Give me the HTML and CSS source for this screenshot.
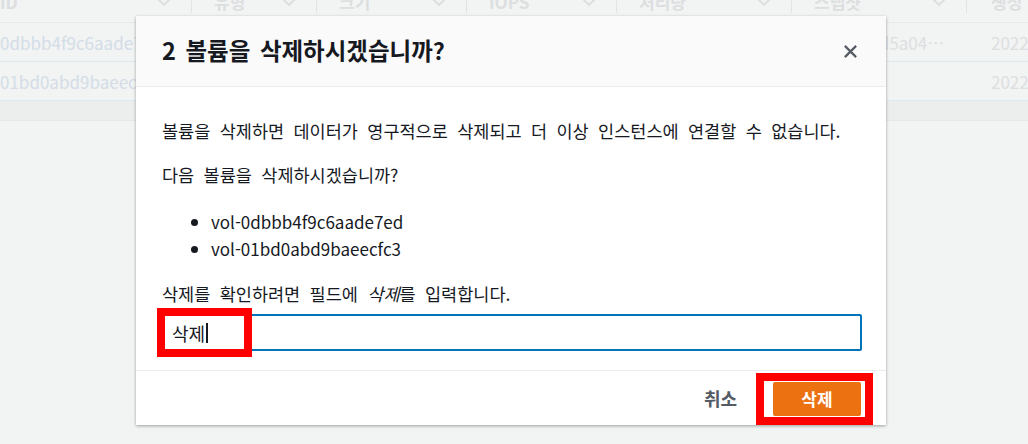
FILE: index.html
```html
<!DOCTYPE html>
<html lang="ko">
<head>
<meta charset="utf-8">
<link rel="stylesheet" href="styles.css">
</head>
<body>
<div class="page">
  <div class="table">
    <div class="row head">
      <div class="cell"><span class="label">ID</span><svg class="caret" viewBox="0 0 14 8"><path d="M1 1l6 6 6-6"/></svg></div>
      <div class="cell"><span class="label">유형</span><svg class="caret" viewBox="0 0 14 8"><path d="M1 1l6 6 6-6"/></svg></div>
      <div class="cell"><span class="label">크기</span><svg class="caret" viewBox="0 0 14 8"><path d="M1 1l6 6 6-6"/></svg></div>
      <div class="cell"><span class="label">IOPS</span><svg class="caret" viewBox="0 0 14 8"><path d="M1 1l6 6 6-6"/></svg></div>
      <div class="cell"><span class="label">처리량</span><svg class="caret" viewBox="0 0 14 8"><path d="M1 1l6 6 6-6"/></svg></div>
      <div class="cell"><span class="label">스냅샷</span><svg class="caret" viewBox="0 0 14 8"><path d="M1 1l6 6 6-6"/></svg></div>
      <div class="cell last"><span class="label">생성</span></div>
    </div>
    <div class="row">
      <div class="cell id">0dbbb4f9c6aade7ed</div>
      <div class="cell"></div>
      <div class="cell"></div>
      <div class="cell"></div>
      <div class="cell"></div>
      <div class="cell snap">snap-0f2d5a04…</div>
      <div class="cell last">2022/05/10</div>
    </div>
    <div class="row">
      <div class="cell id">01bd0abd9baeecfc3</div>
      <div class="cell"></div>
      <div class="cell"></div>
      <div class="cell"></div>
      <div class="cell"></div>
      <div class="cell snap"></div>
      <div class="cell last">2022/05/10</div>
    </div>
    <div class="band"></div>
  </div>

  <div class="modal">
    <div class="modal-head">
      <h2 class="title">2 볼륨을 삭제하시겠습니까?</h2>
      <svg class="close" viewBox="0 0 16 16"><path d="M2 2l12 12M14 2L2 14"/></svg>
    </div>
    <div class="modal-body">
      <p class="para">볼륨을 삭제하면 데이터가 영구적으로 삭제되고 더 이상 인스턴스에 연결할 수 없습니다.</p>
      <p class="para">다음 볼륨을 삭제하시겠습니까?</p>
      <ul class="vols">
        <li>vol-0dbbb4f9c6aade7ed</li>
        <li>vol-01bd0abd9baeecfc3</li>
      </ul>
      <p class="confirm">삭제를 확인하려면 필드에 <em>삭제</em>를 입력합니다.</p>
      <div class="field"><span class="typed">삭제</span><span class="cursor"></span><span class="mark mark-input"></span></div>
    </div>
    <div class="modal-foot">
      <span class="cancel">취소</span>
      <span class="btn-wrap"><span class="btn">삭제</span><span class="mark mark-btn"></span></span>
    </div>
  </div>
</div>
</body>
</html>
```

FILE: styles.css
```css
* { box-sizing: border-box; }
html, body { margin: 0; padding: 0; }
body {
  width: 1028px;
  height: 444px;
  overflow: hidden;
  background: #f2f3f3;
  font-family: "Noto Sans CJK KR", "Noto Sans", sans-serif;
  color: #16191f;
}
.page { position: relative; width: 1028px; height: 444px; overflow: hidden; }

.table { margin-top: -19px; }
.row {
  display: grid;
  grid-template-columns: 192px 125px 150px 150px 175px 175px 1fr;
  border-bottom: 1px solid #dde9ef;
  height: 39px;
  align-items: center;
  font-size: 17px;
  color: #dcdfe0;
}
.row.head { height: 42px; font-weight: 700; border-bottom-color: #e4e8e9; }
.cell {
  display: flex;
  align-items: center;
  padding-left: 22px;
  padding-right: 20px;
  white-space: nowrap;
  overflow: hidden;
}
.cell.last { padding-left: 24px; }
.row.head .cell { border-right: 1px solid #e1e4e5; height: 22px; justify-content: space-between; }
.row.head .cell.last { border-right: none; }
.row.head .cell:first-child { padding-left: 0; }
.row .cell.id { padding-left: 0; color: #d2dde7; }
.cell.snap { display: block; padding-left: 18px; padding-right: 0; }
.caret { width: 14px; height: 8px; fill: none; stroke: #dcdfe0; stroke-width: 2; flex: none; }
.band { height: 20px; background: #eceeee; border-bottom: 1px solid #e4e8e9; }

.modal {
  position: absolute;
  left: 136px;
  top: 16px;
  width: 750px;
  background: #fff;
  box-shadow: 0 1px 3px rgba(0,0,0,.35);
  display: flex;
  flex-direction: column;
}
.modal-head {
  height: 71px;
  background: #fafafa;
  border-bottom: 1px solid #eaeded;
  display: flex;
  align-items: center;
  justify-content: space-between;
  padding: 0 28px 0 26px;
}
.title { margin: 0; font-size: 23.5px; font-weight: 700; color: #16191f; line-height: 1; word-spacing: 3px; }
.close { width: 15px; height: 15px; fill: none; stroke: #545b64; stroke-width: 2.3; }

.modal-body { padding: 33px 24px 19px 26px; font-size: 17.5px; line-height: 22px; word-spacing: 4.5px; }
.para { margin: 0 0 22px; }
.para + .para { margin-bottom: 25px; }
.vols { margin: 0; padding-left: 49px; word-spacing: 0; font-size: 17px; }
.vols li { margin-bottom: 5px; }
.vols li:last-child { margin-bottom: 0; }
.confirm { margin: 23px 0 9px; }
.confirm em { font-style: italic; }
.field {
  position: relative;
  height: 37px;
  border: 2px solid #0073bb;
  border-radius: 2px;
  display: flex;
  align-items: center;
  padding-left: 8px;
}
.typed { color: #16191f; font-size: 18px; }
.cursor { width: 2px; height: 20px; background: #16191f; margin-left: 1px; }
.mark { position: absolute; border: 8px solid #ff0000; }
.mark-input { left: -7px; top: -8px; width: 95px; height: 49px; }

.modal-foot {
  height: 55px;
  border-top: 1px solid #eaeded;
  display: flex;
  align-items: center;
  justify-content: flex-end;
  padding: 0 25px 0 0;
}
.cancel { font-size: 18px; font-weight: 700; color: #545b64; margin-right: 36px; }
.btn-wrap { position: relative; display: flex; margin-top: 1px; }
.btn {
  width: 88px;
  height: 34px;
  background: #ec7211;
  color: #fff;
  border-radius: 2px;
  font-size: 17px;
  font-weight: 700;
  display: flex;
  align-items: center;
  justify-content: center;
}
.mark-btn { left: -17px; top: -9px; width: 117px; height: 52px; }
```
